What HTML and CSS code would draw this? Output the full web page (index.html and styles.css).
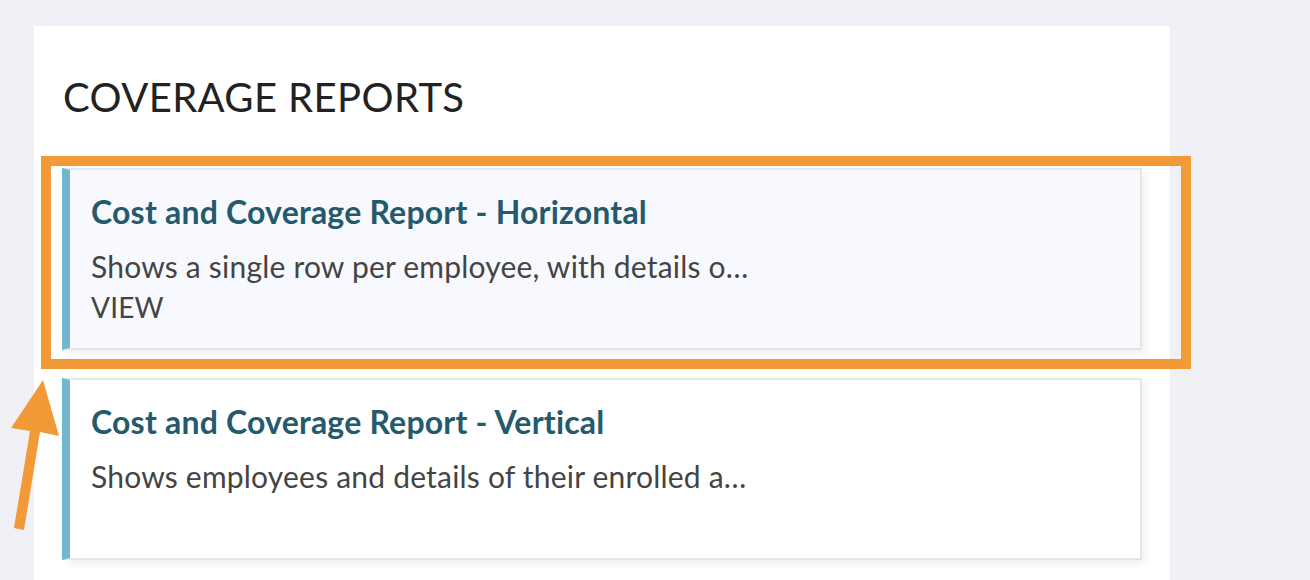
FILE: index.html
```html
<!DOCTYPE html>
<html lang="en">
<head>
    <meta charset="UTF-8">
    <title>Coverage Reports</title>
    <link rel="stylesheet" href="styles.css">
</head>
<body>
    <div class="panel">
        <h1 class="panel-title">COVERAGE REPORTS</h1>
        <div class="report-list">
            <div class="report-card active">
                <h2 class="report-name">Cost and Coverage Report - Horizontal</h2>
                <p class="report-desc">Shows a single row per employee, with details o…</p>
                <a class="report-view" href="#">VIEW</a>
            </div>
            <div class="report-card">
                <h2 class="report-name">Cost and Coverage Report - Vertical</h2>
                <p class="report-desc">Shows employees and details of their enrolled a…</p>
            </div>
        </div>
    </div>

    <div class="highlight-box"></div>
    <svg class="highlight-arrow" width="70" height="160" viewBox="0 0 70 160">
        <polygon points="43,8 11,56 30,59 14,156 24,158 40,60 59,64" fill="#f29a38"/>
    </svg>
</body>
</html>
```

FILE: styles.css
```css
body {
    margin: 0;
    padding: 0;
    background-color: #f0f1f6;
    font-family: Lato, "Open Sans", sans-serif;
}
.panel {
    width: 1080px;
    min-height: 554px;
    margin: 26px 0 0 34px;
    padding: 0 28px;
    background: #ffffff;
    overflow: hidden;
}
.panel-title {
    margin: 47px 0 0 1px;
    font-size: 40px;
    font-weight: 400;
    color: #222222;
    line-height: 48px;
    letter-spacing: 0.4px;
}
.report-list {
    display: flex;
    flex-direction: column;
    gap: 28px;
    margin-top: 47px;
}
.report-card {
    box-sizing: border-box;
    height: 182px;
    padding: 22px 20px 0 21px;
    background: #ffffff;
    border: 2px solid #e6e6e8;
    border-left: 8px solid #72b7cf;
    box-shadow: 4px 4px 8px rgba(0, 0, 0, 0.06);
}
.report-card.active {
    background: #f8f9fe;
}
.report-name {
    margin: 0;
    font-size: 32px;
    font-weight: 700;
    line-height: 40px;
    letter-spacing: 0.2px;
    color: #245a6c;
}
.report-desc {
    margin: 14px 0 0;
    font-size: 30px;
    line-height: 40px;
    letter-spacing: 0.2px;
    color: #444444;
}
.report-view {
    display: block;
    margin-top: 1px;
    font-size: 28px;
    line-height: 40px;
    letter-spacing: 0.2px;
    color: #444444;
    text-decoration: none;
}
.highlight-box {
    position: absolute;
    left: 41px;
    top: 156px;
    width: 1130px;
    height: 193px;
    border: 10px solid #f29a38;
}
.highlight-arrow {
    position: absolute;
    left: 0;
    top: 372px;
}
```
